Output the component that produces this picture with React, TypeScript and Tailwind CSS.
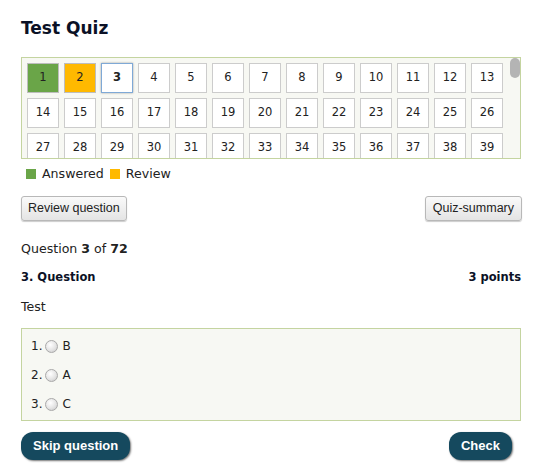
import React from "react";

const items = Array.from({ length: 72 }, (_, i) => i + 1);

const answers = ["B", "A", "C"];

const Radio = () => (
  <span className="inline-block w-[13px] h-[13px] rounded-full border border-[#a9a9a9] bg-[radial-gradient(circle_at_40%_35%,#ffffff_0%,#e4e4e4_55%,#c4c4c4_100%)]" />
);

const GridItem = ({ n }: { n: number }) => {
  let cls = "bg-white border-[#cccccc]";
  if (n === 1) cls = "bg-[#6aa548] border-[#bdbdbd]";
  if (n === 2) cls = "bg-[#ffb900] border-[#bdbdbd]";
  if (n === 3) cls = "bg-white border-[#7fa9d6] font-bold shadow-[0_0_2px_rgba(0,0,0,0.35)]";
  return (
    <div
      className={`w-[32px] h-[30px] border flex items-center justify-center text-[11.5px] text-[#222] ${cls}`}
    >
      {n}
    </div>
  );
};

export default function App() {
  return (
    <div className="bg-white min-h-[470px] pl-[21px] pr-[22px] font-['DejaVu_Sans',Verdana,sans-serif] text-[#222]">
      <h1 className="pt-[18px] h-[38px] text-[17px] leading-[20px] font-bold text-[#0b1126]">
        Test Quiz
      </h1>

      {/* question list */}
      <div className="relative mt-[19px] h-[102px] border border-[#c4d4a0] bg-[#f7f8f3] overflow-hidden">
        <div className="flex flex-wrap gap-[5px] p-[5px]">
          {items.map((n) => (
            <GridItem key={n} n={n} />
          ))}
        </div>
        <div className="absolute right-0 top-0 w-[10px] h-[20px] rounded-full bg-[#b4b4b4]" />
      </div>

      {/* legend */}
      <div className="mt-[7px] flex items-center text-[12.6px] leading-[16px] pl-[5px]">
        <span className="w-[10px] h-[10px] bg-[#6aa548] mr-[6px]" />
        <span className="mr-[6px]">Answered</span>
        <span className="w-[10px] h-[10px] bg-[#ffb900] mr-[6px]" />
        <span>Review</span>
      </div>

      <div className="mt-[14px] flex justify-between font-['Liberation_Sans',Arial,sans-serif] text-[12.5px]">
        <button className="h-[25px] px-[6px] rounded-[3px] border border-[#b8b8b8] bg-gradient-to-b from-[#fafafa] to-[#e4e4e4] shadow-[0_1px_1px_rgba(0,0,0,0.2)] text-[#222]">
          Review question
        </button>
        <button className="h-[25px] px-[7px] rounded-[3px] border border-[#b8b8b8] bg-gradient-to-b from-[#fafafa] to-[#e4e4e4] shadow-[0_1px_1px_rgba(0,0,0,0.2)] text-[#222] -mr-px">
          Quiz-summary
        </button>
      </div>

      <div className="mt-[20px] text-[12.6px] leading-[16px]">
        Question <b>3</b> of <b>72</b>
      </div>

      <div className="mt-[12px] flex justify-between text-[11.5px] leading-[16px] font-bold text-[#0b1126]">
        <span>3. Question</span>
        <span>3 points</span>
      </div>

      <div className="mt-[14px] text-[12.6px] leading-[16px]">Test</div>

      {/* answers */}
      <div className="mt-[13px] border border-[#c4d4a0] bg-[#f7f8f3] pl-[9px] pt-[9px] pb-[8px] flex flex-col gap-[13px] text-[12px] leading-[16px]">
        {answers.map((a, i) => (
          <label key={a} className="flex items-center">
            <span>{i + 1}.</span>
            <span className="ml-[3px] flex items-center">
              <Radio />
            </span>
            <span className="ml-[4px]">{a}</span>
          </label>
        ))}
      </div>

      <div className="mt-[11px] flex justify-between font-['Liberation_Sans',Arial,sans-serif] text-[13px] font-bold text-white">
        <button className="h-[28px] px-[12px] rounded-[12px] bg-[#15495e] shadow-[1px_1px_2px_rgba(0,0,0,0.55)]">
          Skip question
        </button>
        <button className="h-[28px] px-[12px] mr-[9px] rounded-[12px] bg-[#15495e] shadow-[1px_1px_2px_rgba(0,0,0,0.55)]">
          Check
        </button>
      </div>
    </div>
  );
}
